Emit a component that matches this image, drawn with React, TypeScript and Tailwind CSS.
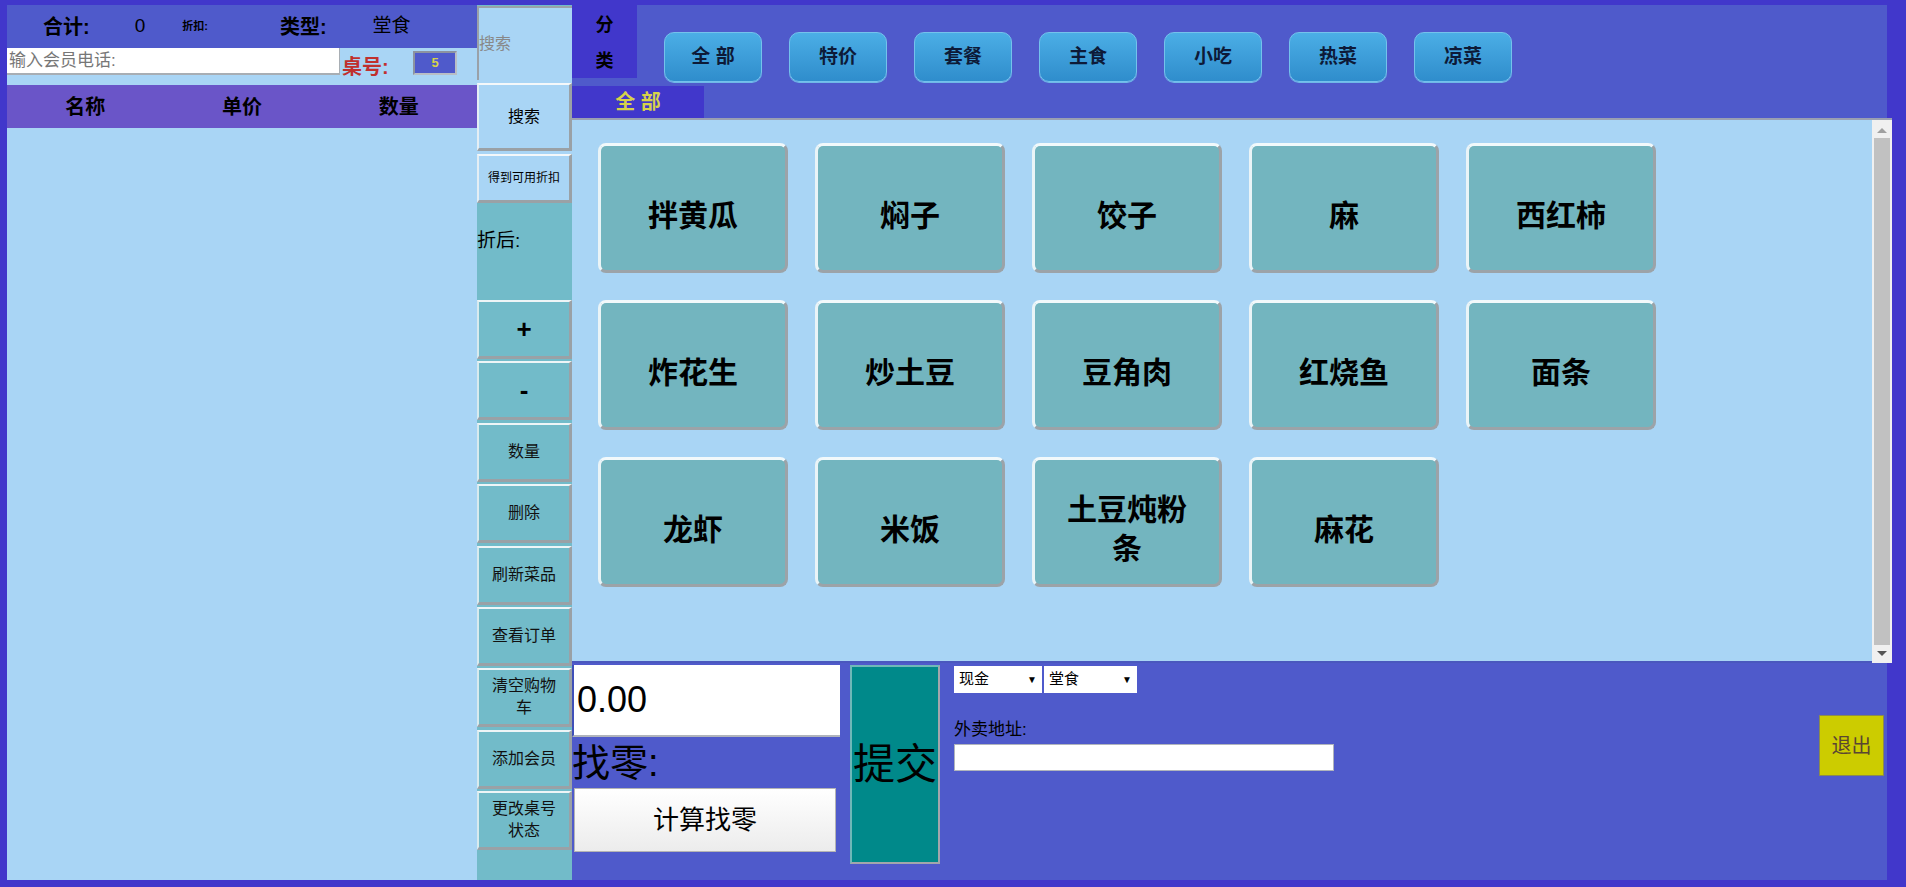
const cats = ["全 部", "特价", "套餐", "主食", "小吃", "热菜", "凉菜"];
const dishes = ["拌黄瓜", "焖子", "饺子", "麻", "西红柿", "炸花生", "炒土豆", "豆角肉", "红烧鱼", "面条", "龙虾", "米饭", "土豆炖粉条", "麻花"];
const tools = ["+", "-", "数量", "删除", "刷新菜品", "查看订单", "清空购物车", "添加会员", "更改桌号状态"];

function ToolButton({ label }: { label: string }) {
  const big = label === "+" || label === "-";
  return (
    <div className="flex h-[59px] shrink-0 items-center justify-center border-t-2 border-l-2 border-r-[3px] border-b-[3px] border-t-[#EEF5F7] border-l-[#D8EAEE] border-r-[#9AA1A6] border-b-[#9AA1A6] bg-[#72BBC9] px-[10px] text-center">
      <span className={big ? "text-[26px] font-bold leading-none" : "text-[16px] leading-[22px] text-[#111]"}>{label}</span>
    </div>
  );
}

export default function App() {
  return (
    <div className="flex h-[887px] w-[1906px] overflow-hidden bg-[#4137CB] pt-[5px] pl-[7px] font-['Liberation_Sans','Noto_Sans_CJK_SC',sans-serif] text-black">
      {/* Left: cart */}
      <div className="flex h-[875px] w-[470px] shrink-0 flex-col bg-[#A9D5F5]">
        <div className="flex h-[43px] items-center bg-[#4F5ACB]">
          <span className="ml-[36px] text-[20px] font-bold">合计:</span>
          <span className="ml-[45px] text-[19px]">0</span>
          <span className="ml-[37px] text-[11px] font-bold">折扣:</span>
          <span className="ml-[72px] text-[20px] font-bold">类型:</span>
          <span className="ml-[46px] text-[19px]">堂食</span>
        </div>
        <div className="flex h-[37px] items-start">
          <div className="flex h-[27px] w-[333px] items-center border-b-2 border-r border-[#A8AEB4] bg-white pl-[2px] text-[17px] text-[#777]">
            输入会员电话:
          </div>
          <span className="ml-[2px] mt-[8px] w-[71px] text-[20px] font-bold leading-[22px] text-[#C0302E]">桌号:</span>
          <div className="mt-[3px] flex h-[24px] w-[44px] items-center justify-center border-2 border-t-[#8C93A0] border-l-[#8C93A0] border-r-[#B8BEC6] border-b-[#B8BEC6] bg-[#4F5ACB] text-[13px] font-bold text-[#D6D24A]">
            5
          </div>
        </div>
        <div className="grid h-[43px] grid-cols-3 items-center bg-[#6A55C8] text-center text-[20px] font-bold">
          <span>名称</span>
          <span>单价</span>
          <span>数量</span>
        </div>
        <div className="flex-1" />
      </div>

      {/* Middle: tools */}
      <div className="flex h-[875px] w-[95px] shrink-0 flex-col bg-[#72BBC9] pt-[1px]">
        <div className="flex h-[74px] items-center border-t-2 border-l-2 border-[#9AA1A8] bg-[#A9D5F5] text-[16px] text-[#888]">
          搜索
        </div>
        <div className="h-[3px] bg-[#A9D5F5]" />
        <div className="flex h-[68px] items-center justify-center border-t-2 border-l-2 border-r-[3px] border-b-[3px] border-t-[#F4F8FA] border-l-[#E4EEF4] border-r-[#9AA1A6] border-b-[#9AA1A6] bg-[#A9D5F5] text-[16px]">
          搜索
        </div>
        <div className="h-[3px] bg-[#A9D5F5]" />
        <div className="flex h-[49px] items-center justify-center border-t-2 border-l-2 border-r-[3px] border-b-[3px] border-t-[#F4F8FA] border-l-[#E4EEF4] border-r-[#9AA1A6] border-b-[#9AA1A6] bg-[#A9D5F5] text-[12px]">
          得到可用折扣
        </div>
        <div className="h-[97px] pt-[24px] text-[19px]">折后:</div>
        <div className="flex flex-col gap-[2.4px]">
          {tools.map((t) => (
            <ToolButton key={t} label={t} />
          ))}
        </div>
      </div>

      {/* Right: menu */}
      <div className="flex h-[875px] w-[1320px] shrink-0 flex-col">
        <div className="mr-[5px] flex h-[81px] items-start bg-[#4F5ACB]">
          <div className="flex h-[73px] w-[65px] flex-col items-center justify-center gap-[14px] bg-[#4137CB] pt-[2px] text-[18px] font-bold leading-[22px]">
            <span>分</span>
            <span>类</span>
          </div>
          <div className="ml-[27px] mt-[27px] flex gap-[27px]">
            {cats.map((c) => (
              <div
                key={c}
                className="flex h-[50px] w-[98px] items-center justify-center rounded-[10px] border border-[#74C2EC] bg-linear-to-b from-[#4BAEE6] to-[#2F8DCC] text-[19px] font-bold text-[#0D1A38] shadow-[0_1px_0_#6FB8E8]"
              >
                {c === "全 部" ? "全\u00a0部" : c}
              </div>
            ))}
          </div>
        </div>
        <div className="mr-[5px] flex h-[32px] bg-[#4F5ACB]">
          <div className="flex w-[132px] items-center justify-center bg-[#4137CB] text-[20px] font-bold text-[#D6D24A]">全&nbsp;部</div>
        </div>

        <div className="flex h-[545px] border-t-2 border-[#9A9FB2] bg-[#A9D5F5]">
          <div className="flex-1 border-b-2 border-[#4A58BE] pl-[26px] pt-[23px]">
            <div className="grid grid-cols-[repeat(5,190px)] gap-x-[27px] gap-y-[27px]">
              {dishes.map((d) => (
                <div
                  key={d}
                  className="flex h-[130px] items-center justify-center rounded-[8px] border-t-[3px] border-l-[3px] border-r-[3px] border-b-[3px] border-t-[#F2F9FB] border-l-[#EAF4F7] border-r-[#9CA3A8] border-b-[#9CA3A8] bg-[#73B5BF] px-[28px] pt-[14px] text-center text-[30px] font-bold leading-[39px]"
                >
                  {d}
                </div>
              ))}
            </div>
          </div>
          <div className="flex w-[20px] flex-col items-center bg-[#F0F0F0] py-[2px]">
            <div className="flex h-[16px] items-center">
              <div className="h-0 w-0 border-x-[5px] border-b-[5px] border-x-transparent border-b-[#A0A0A0]" />
            </div>
            <div className="w-[16px] flex-1 bg-[#C1C1C1]" />
            <div className="flex h-[16px] items-center">
              <div className="h-0 w-0 border-x-[5px] border-t-[5px] border-x-transparent border-t-[#555]" />
            </div>
          </div>
        </div>

        <div className="mr-[5px] flex flex-1 items-start bg-[#4F5ACB]">
          <div className="flex w-[268px] flex-col">
            <div className="mt-[2px] flex h-[72px] items-center border-l-2 border-b-2 border-l-[#3F4FB8] border-b-[#B0B4BC] bg-white pl-[3px] text-[36px] leading-none">
              0.00
            </div>
            <div className="h-[51px] pt-[2px] text-[38px] leading-[48px]">找零:</div>
            <div className="ml-[2px] flex h-[64px] w-[262px] items-center justify-center border border-[#B4B4B4] bg-linear-to-b from-white to-[#ECECEC] text-[26px]">
              计算找零
            </div>
          </div>
          <div className="ml-[10px] mt-[2px] flex h-[199px] w-[90px] items-center justify-center whitespace-nowrap border-t-2 border-l-2 border-r-2 border-b-2 border-t-[#6FB8B8] border-l-[#6FB8B8] border-r-[#A2A6AC] border-b-[#A2A6AC] bg-[#00898A] text-[42px]">
            提交
          </div>
          <div className="ml-[14px] mt-[3px] flex flex-col">
            <div className="flex gap-[2px]">
              <div className="flex h-[27px] w-[88px] items-center justify-between bg-white px-[5px] text-[15px]">
                <span>现金</span>
                <span className="text-[10px]">▼</span>
              </div>
              <div className="flex h-[27px] w-[93px] items-center justify-between bg-white px-[5px] text-[15px]">
                <span>堂食</span>
                <span className="text-[10px]">▼</span>
              </div>
            </div>
            <div className="mt-[26px] text-[17px] leading-[22px]">外卖地址:</div>
            <div className="mt-[3px] h-[27px] w-[380px] border border-[#B0B4BC] bg-white" />
          </div>
          <div className="ml-auto mr-[3px] mt-[52px] flex h-[61px] w-[65px] items-center justify-center border border-[#8A8A50] bg-[#CCCC00] text-[20px] text-[#5A4632]">
            退出
          </div>
        </div>
      </div>
    </div>
  );
}
